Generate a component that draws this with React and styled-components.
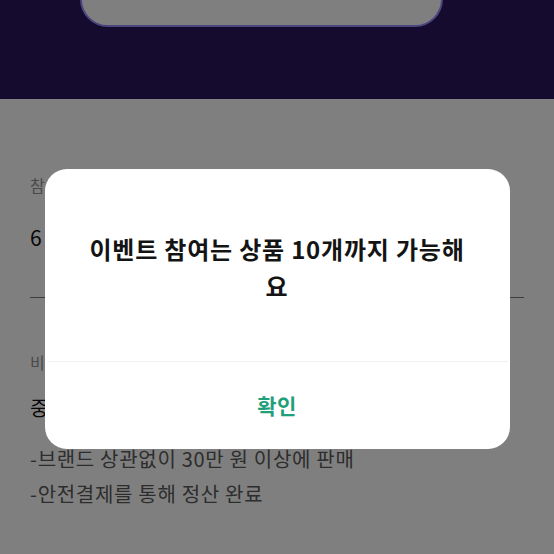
import React from "react";
import styled, { createGlobalStyle } from "styled-components";

const Global = createGlobalStyle`
  html, body { margin: 0; padding: 0; background: #fff; }
  body { font-family: "Noto Sans CJK KR", "Noto Sans", sans-serif; width: 554px; height: 554px; overflow: hidden; }
  * { box-sizing: border-box; }
`;

const Page = styled.div`
  width: 554px;
  height: 554px;
  position: relative;
  overflow: hidden;
  background: #fff;
`;

const Header = styled.header`
  height: 99px;
  background: #29165c;
  overflow: hidden;
`;

const SearchPill = styled.div`
  margin-top: -30px;
  margin-left: 80px;
  width: 363px;
  height: 57px;
  border-radius: 28px;
  background: #fff;
  border: 2px solid #968cff;
`;

const Content = styled.main`
  padding: 0 30px;
  display: flex;
  flex-direction: column;
`;

const Section = styled.section`
  display: flex;
  flex-direction: column;
  padding-top: ${(p) => p.$top}px;
`;

const Label = styled.div`
  font-size: 16px;
  line-height: 22px;
  color: #959595;
  letter-spacing: 0.5px;
`;

const Value = styled.div`
  font-size: ${(p) => (p.$large ? 21 : 20)}px;
  line-height: 28px;
  color: #111;
  letter-spacing: ${(p) => (p.$large ? 5 : 0.7)}px;
  margin-top: ${(p) => p.$gap}px;
`;

const Divider = styled.hr`
  border: none;
  height: 1px;
  background: #7a7a7a;
  margin: ${(p) => p.$top}px 0 0;
`;

const Bullets = styled.div`
  margin-top: 19px;
  display: flex;
  flex-direction: column;
`;

const Bullet = styled.div`
  font-size: 20px;
  line-height: 35px;
  color: #5a5a5a;
  letter-spacing: 0.7px;
`;

const Overlay = styled.div`
  position: absolute;
  inset: 0;
  background: rgba(0, 0, 0, 0.5);
  display: flex;
  flex-direction: column;
  align-items: center;
  padding-top: 169px;
`;

const Dialog = styled.div`
  width: 465px;
  height: 280px;
  background: #fff;
  border-radius: 22px;
  display: flex;
  flex-direction: column;
  overflow: hidden;
`;

const Message = styled.div`
  padding: 61px 40px 0;
  height: 192px;
  text-align: center;
  font-size: 24px;
  line-height: 37px;
  font-weight: 700;
  color: #141414;
  letter-spacing: 0.8px;
`;

const DialogDivider = styled.div`
  height: 1px;
  background: #f1f1f1;
  margin: 0 2px;
`;

const ConfirmButton = styled.button`
  flex: 1;
  border: none;
  background: transparent;
  font-family: inherit;
  font-size: 21px;
  font-weight: 700;
  color: #1fa07a;
  letter-spacing: 0.5px;
  padding: 0 0 2px;
  cursor: pointer;
`;

export default function App() {
  return (
    <>
      <Global />
      <Page>
        <Header>
          <SearchPill />
        </Header>
        <Content>
          <Section $top={75}>
            <Label>참여 상품 수</Label>
            <Value $gap={27} $large>6개</Value>
          </Section>
          <Divider $top={46} />
          <Section $top={53}>
            <Label>비고</Label>
            <Value $gap={21}>중고 상품 판매 조건</Value>
          </Section>
          <Bullets>
            <Bullet>-브랜드 상관없이 30만 원 이상에 판매</Bullet>
            <Bullet>-안전결제를 통해 정산 완료</Bullet>
          </Bullets>
        </Content>
        <Overlay>
          <Dialog role="alertdialog">
            <Message>이벤트 참여는 상품 10개까지 가능해요</Message>
            <DialogDivider />
            <ConfirmButton>확인</ConfirmButton>
          </Dialog>
        </Overlay>
      </Page>
    </>
  );
}
